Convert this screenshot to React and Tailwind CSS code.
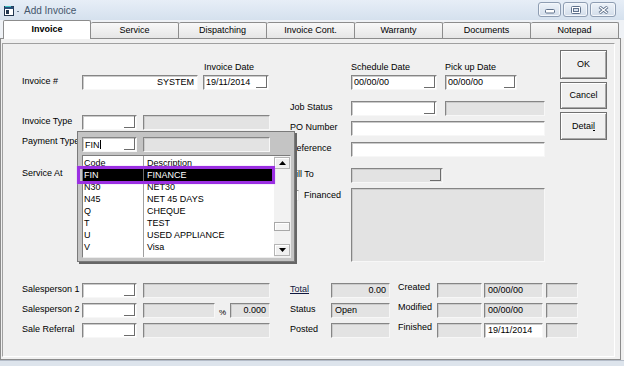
import React from "react";

const sunken =
  "border border-t-[#858585] border-l-[#858585] border-r-[#f7f7f7] border-b-[#f7f7f7] shadow-[inset_1px_1px_0_#cbcbcb]";

function Field({ w, gray, right, children }) {
  return (
    <div
      className={`${w} flex h-[15px] shrink-0 items-center overflow-hidden whitespace-nowrap px-[3px] ${sunken} ${
        gray ? "bg-[#e3e3e3]" : "bg-white"
      } ${right ? "justify-end" : ""}`}
    >
      {children}
    </div>
  );
}

function Combo({ w, gray, children }) {
  return (
    <div
      className={`${w} flex h-[15px] shrink-0 items-stretch ${sunken} ${
        gray ? "bg-[#e3e3e3]" : "bg-white"
      }`}
    >
      <div className="flex flex-1 items-center overflow-hidden whitespace-nowrap pl-[2px]">
        {children}
      </div>
      <div className="mb-[1px] mr-[1px] w-[11px] border-r border-b border-[#6c6c6c]" />
    </div>
  );
}

function Label({ w, children }) {
  return (
    <div className={`${w} shrink-0 self-start whitespace-nowrap pt-[2px]`}>
      {children}
    </div>
  );
}

function WinButton({ w, children }) {
  return (
    <div
      className={`${w} flex h-[15px] items-center justify-center rounded-[3px] border border-[#8e9db2] bg-linear-to-b from-[#eef3f9] to-[#d2ddea] shadow-[inset_0_0_0_1px_#f4f7fb]`}
    >
      {children}
    </div>
  );
}

function Arrow({ up }) {
  return (
    <svg width="7" height="4" viewBox="0 0 7 4">
      <path d={up ? "M0 4 L3.5 0 L7 4 Z" : "M0 0 L3.5 4 L7 0 Z"} fill="#000" />
    </svg>
  );
}

const tabs = [
  "Invoice",
  "Service",
  "Dispatching",
  "Invoice Cont.",
  "Warranty",
  "Documents",
  "Notepad",
];

const rows = [
  ["N30", "NET30"],
  ["N45", "NET 45 DAYS"],
  ["Q", "CHEQUE"],
  ["T", "TEST"],
  ["U", "USED APPLIANCE"],
  ["V", "Visa"],
];

const btn =
  "flex w-[47px] items-center justify-center border border-[#707070] bg-[#f0f0f0] shadow-[inset_1px_1px_0_#ffffff,inset_-1px_-1px_0_#a8a8a8]";

export default function App() {
  return (
    <div className="relative h-[366px] w-[624px] overflow-hidden bg-[#f0f0f0] font-['Liberation_Sans',Arial,sans-serif] text-[9px] leading-none text-black">
      {/* title bar */}
      <div className="flex h-[20px] items-start bg-linear-to-b from-[#e7eef7] to-[#d5e1ee]">
        <div className="ml-[4px] mt-[6px] flex items-center">
          <svg width="12" height="10" viewBox="0 0 12 10">
            <rect x="0.5" y="0.5" width="9" height="9" fill="#fff" stroke="#22364f" />
            <rect x="0.5" y="0.5" width="9" height="2.5" fill="#2a4f7a" />
            <rect x="2" y="4" width="3" height="4" fill="#22364f" />
            <path d="M1 0.5 L7 0.5" stroke="#3fc4c4" strokeWidth="1" />
          </svg>
          <span className="ml-[1px] h-[1px] w-[2px] bg-[#6a7a8c]" />
        </div>
        <span className="ml-[5px] mt-[6px] text-[10px] text-[#45566b]">Add Invoice</span>
        <div className="ml-auto mr-[8px] mt-[2px] flex gap-[2px]">
          <WinButton w="w-[23px]">
            <svg width="10" height="8" viewBox="0 0 10 8">
              <rect x="0.5" y="3.5" width="9" height="3.5" rx="1" fill="#fff" stroke="#5f718b" />
            </svg>
          </WinButton>
          <WinButton w="w-[25px]">
            <svg width="10" height="8" viewBox="0 0 10 8">
              <rect x="0.5" y="0.5" width="9" height="7" rx="1" fill="#fff" stroke="#5f718b" />
              <rect x="2.5" y="2.5" width="5" height="3" fill="#d7e0ec" stroke="#5f718b" />
            </svg>
          </WinButton>
          <WinButton w="w-[26px]">
            <svg width="11" height="8" viewBox="0 0 11 8">
              <path d="M1.5 0.8 L9.5 7.2 M9.5 0.8 L1.5 7.2" stroke="#5f718b" strokeWidth="3" />
              <path d="M1.8 1 L9.2 7 M9.2 1 L1.8 7" stroke="#fff" strokeWidth="1.2" />
            </svg>
          </WinButton>
        </div>
      </div>

      {/* tabs */}
      <div className="flex h-[18px] items-end bg-[#eff2f6] pl-[3px]">
        {tabs.map((t, i) =>
          i === 0 ? (
            <div
              key={t}
              className="relative z-10 -mb-px flex h-[19px] w-[88px] items-center justify-center rounded-t-[2px] border border-b-0 border-[#8c8c8c] bg-white pb-[1px] font-bold"
            >
              {t}
            </div>
          ) : (
            <div
              key={t}
              className="flex h-[16px] w-[88px] items-center justify-center rounded-t-[2px] border-t border-r border-[#8c8c8c] bg-linear-to-b from-[#f8f8f8] to-[#e6e6e6]"
            >
              {t}
            </div>
          )
        )}
      </div>

      {/* tab page */}
      <div className="h-[322px] w-[621px] border border-[#8c8c8c] bg-[#f0f0f0]">
        <div className="ml-[1px] mt-[4px] h-[314px] w-[613px] border border-t-[#a0a0a0] border-l-[#a0a0a0] border-r-white border-b-white">
          {/* top block */}
          <div className="flex h-[239px] items-start">
            {/* left column */}
            <div className="ml-[19px] mt-[17px] w-[248px]">
              <div className="flex h-[14px] items-start pl-[182px] pt-[2px]">Invoice Date</div>
              <div className="flex h-[15px]">
                <Label w="w-[60px]">Invoice #</Label>
                <Field w="w-[116px]" right>
                  SYSTEM
                </Field>
                <div className="ml-[5px]">
                  <Combo w="w-[66px]">19/11/2014</Combo>
                </div>
              </div>
              <div className="mt-[25px] flex h-[15px]">
                <Label w="w-[60px]">Invoice Type</Label>
                <Combo w="w-[55px]" />
                <div className="ml-[6px]">
                  <Field w="w-[127px]" gray />
                </div>
              </div>
              <div className="mt-[5px] flex h-[15px]">
                <Label w="w-[60px]">Payment Type</Label>
                <Combo w="w-[55px]" />
                <div className="ml-[6px]">
                  <Field w="w-[127px]" gray />
                </div>
              </div>
              <div className="mt-[17px] flex h-[13px]">
                <Label w="w-[60px]">Service At</Label>
              </div>
            </div>

            {/* middle column */}
            <div className="ml-[20px] mt-[17px] w-[255px]">
              <div className="flex h-[14px] items-start pt-[2px]">
                <span className="ml-[61px] w-[94px]">Schedule Date</span>
                <span>Pick up Date</span>
              </div>
              <div className="flex h-[15px]">
                <div className="ml-[61px]">
                  <Combo w="w-[86px]">00/00/00</Combo>
                </div>
                <div className="ml-[8px]">
                  <Combo w="w-[72px]">00/00/00</Combo>
                </div>
              </div>
              <div className="mt-[11px] flex h-[15px]">
                <Label w="w-[61px]">Job Status</Label>
                <Combo w="w-[86px]" />
                <div className="ml-[8px]">
                  <Field w="w-[100px]" gray />
                </div>
              </div>
              <div className="mt-[5px] flex h-[15px]">
                <Label w="w-[61px]">PO Number</Label>
                <Field w="w-[194px]" />
              </div>
              <div className="mt-[6px] flex h-[15px]">
                <Label w="w-[61px]">Reference</Label>
                <Field w="w-[194px]" />
              </div>
              <div className="mt-[11px] flex h-[15px]">
                <Label w="w-[61px]">Bill To</Label>
                <Combo w="w-[92px]" gray />
              </div>
              <div className="mt-[5px] flex">
                <div className="flex w-[61px] shrink-0 items-start pt-[2px]">
                  <div className="-ml-[2px] h-[11px] w-[11px] shrink-0 border border-t-[#8a8a8a] border-l-[#8a8a8a] border-r-[#e8e8e8] border-b-[#e8e8e8] bg-white" />
                  <span className="ml-[5px] pt-[1px]">Financed</span>
                </div>
                <div className={`h-[74px] w-[194px] ${sunken} bg-[#e3e3e3]`} />
              </div>
            </div>

            {/* buttons */}
            <div className="ml-[15px] mt-[6px] flex w-[47px] flex-col gap-[3px]">
              <div className={`${btn} h-[29px]`}>OK</div>
              <div className={`${btn} h-[27px]`}>Cancel</div>
              <div className={`${btn} h-[28px]`}>
                <span>
                  Detai<span className="underline">l</span>
                </span>
              </div>
            </div>
          </div>

          {/* bottom block */}
          <div className="flex items-start">
            <div className="ml-[19px] flex w-[251px] flex-col gap-[5px]">
              <div className="flex h-[15px]">
                <Label w="w-[60px]">Salesperson 1</Label>
                <Combo w="w-[55px]" />
                <div className="ml-[6px]">
                  <Field w="w-[127px]" gray />
                </div>
              </div>
              <div className="flex h-[15px]">
                <Label w="w-[60px]">Salesperson 2</Label>
                <Combo w="w-[55px]" />
                <div className="ml-[6px]">
                  <Field w="w-[72px]" gray />
                </div>
                <span className="w-[15px] self-end pb-[1px] text-center text-[8px]">%</span>
                <Field w="w-[40px]" gray right>
                  0.000
                </Field>
              </div>
              <div className="flex h-[15px]">
                <Label w="w-[60px]">Sale Referral</Label>
                <Combo w="w-[55px]" />
                <div className="ml-[6px]">
                  <Field w="w-[127px]" gray />
                </div>
              </div>
            </div>

            <div className="ml-[17px] flex flex-col gap-[5px]">
              {[
                ["Total", "0.00", "Created", "00/00/00", false],
                ["Status", "Open", "Modified", "00/00/00", false],
                ["Posted", "", "Finished", "19/11/2014", true],
              ].map(([a, av, b, bv, white], i) => (
                <div key={a} className="flex h-[15px]">
                  <Label w="w-[41px]">
                    {i === 0 ? <span className="text-[#101840] underline">{a}</span> : a}
                  </Label>
                  <Field w="w-[59px]" gray right={i === 0}>
                    {av}
                  </Field>
                  <div className="ml-[8px] flex">
                    <div className="w-[39px] shrink-0 self-start whitespace-nowrap">{b}</div>
                    <Field w="w-[45px]" gray />
                    <div className="ml-[2px]">
                      <Field w="w-[59px]" gray={!white}>
                        {bv}
                      </Field>
                    </div>
                    <div className="ml-[3px]">
                      <Field w="w-[32px]" gray />
                    </div>
                  </div>
                </div>
              ))}
            </div>
          </div>
        </div>
      </div>

      {/* bottom window frame */}
      <div className="h-[6px] border-t border-[#b4bcc8] bg-[#dde4ec]" />

      {/* lookup popup */}
      <div className="absolute left-[77px] top-[131px] z-20 h-[131px] w-[218px] border border-[#7a7a7a] bg-[#c4c4c4] shadow-[2px_2px_0_#666666]">
        <div className="ml-[4px] mt-[5px] flex h-[15px]">
          <Combo w="w-[55px]">
            <span>
              FIN<span className="inline-block h-[9px] w-px translate-y-[1px] bg-black" />
            </span>
          </Combo>
          <div className="ml-[6px]">
            <Field w="w-[127px]" gray />
          </div>
        </div>
        <div className="ml-[4px] mt-[3px] flex h-[103px] w-[209px] border border-t-[#7d7d7d] border-l-[#7d7d7d] border-r-[#ececec] border-b-[#ececec] bg-white">
          <div className="flex flex-1 flex-col overflow-hidden">
            <div className="flex h-[13px] shrink-0 items-end overflow-hidden">
              <div className="h-full w-[61px] border-r border-[#a0a0a0] pl-[1px] pt-[3px]">Code</div>
              <div className="pl-[3px] pb-[1px]">Description</div>
            </div>
            <div className="flex h-[12px] shrink-0 items-center bg-black text-white">
              <div className="flex h-full w-[61px] items-center border-r border-[#6a6a6a] pl-[1px]">FIN</div>
              <div className="pl-[3px]">FINANCE</div>
            </div>
            {rows.map(([c, d]) => (
              <div key={c} className="flex h-[12px] shrink-0 items-center">
                <div className="flex h-full w-[61px] items-center border-r border-[#a0a0a0] pl-[1px]">{c}</div>
                <div className="pl-[3px]">{d}</div>
              </div>
            ))}
            <div className="flex flex-1">
              <div className="w-[61px] border-r border-[#a0a0a0]" />
            </div>
          </div>
          <div className="flex w-[16px] shrink-0 flex-col bg-[#f2f2f2] py-[1px]">
            <div className="flex h-[12px] items-center justify-center border border-[#b4b4b4] bg-[#f0f0f0] shadow-[inset_1px_1px_0_#fff]">
              <Arrow up />
            </div>
            <div className="flex flex-1 flex-col">
              <div className="mt-[53px] h-[9px] border border-[#a8a8a8] bg-[#f4f4f4] shadow-[inset_1px_1px_0_#fff]" />
            </div>
            <div className="flex h-[12px] items-center justify-center border border-[#b4b4b4] bg-[#f0f0f0] shadow-[inset_1px_1px_0_#fff]">
              <Arrow />
            </div>
          </div>
        </div>
      </div>

      {/* selection highlight */}
      <div className="absolute left-[77px] top-[166px] z-30 h-[18px] w-[198px] border-[3px] border-[#9b2fe2] shadow-[0_0_1px_#c79af0]" />
    </div>
  );
}
